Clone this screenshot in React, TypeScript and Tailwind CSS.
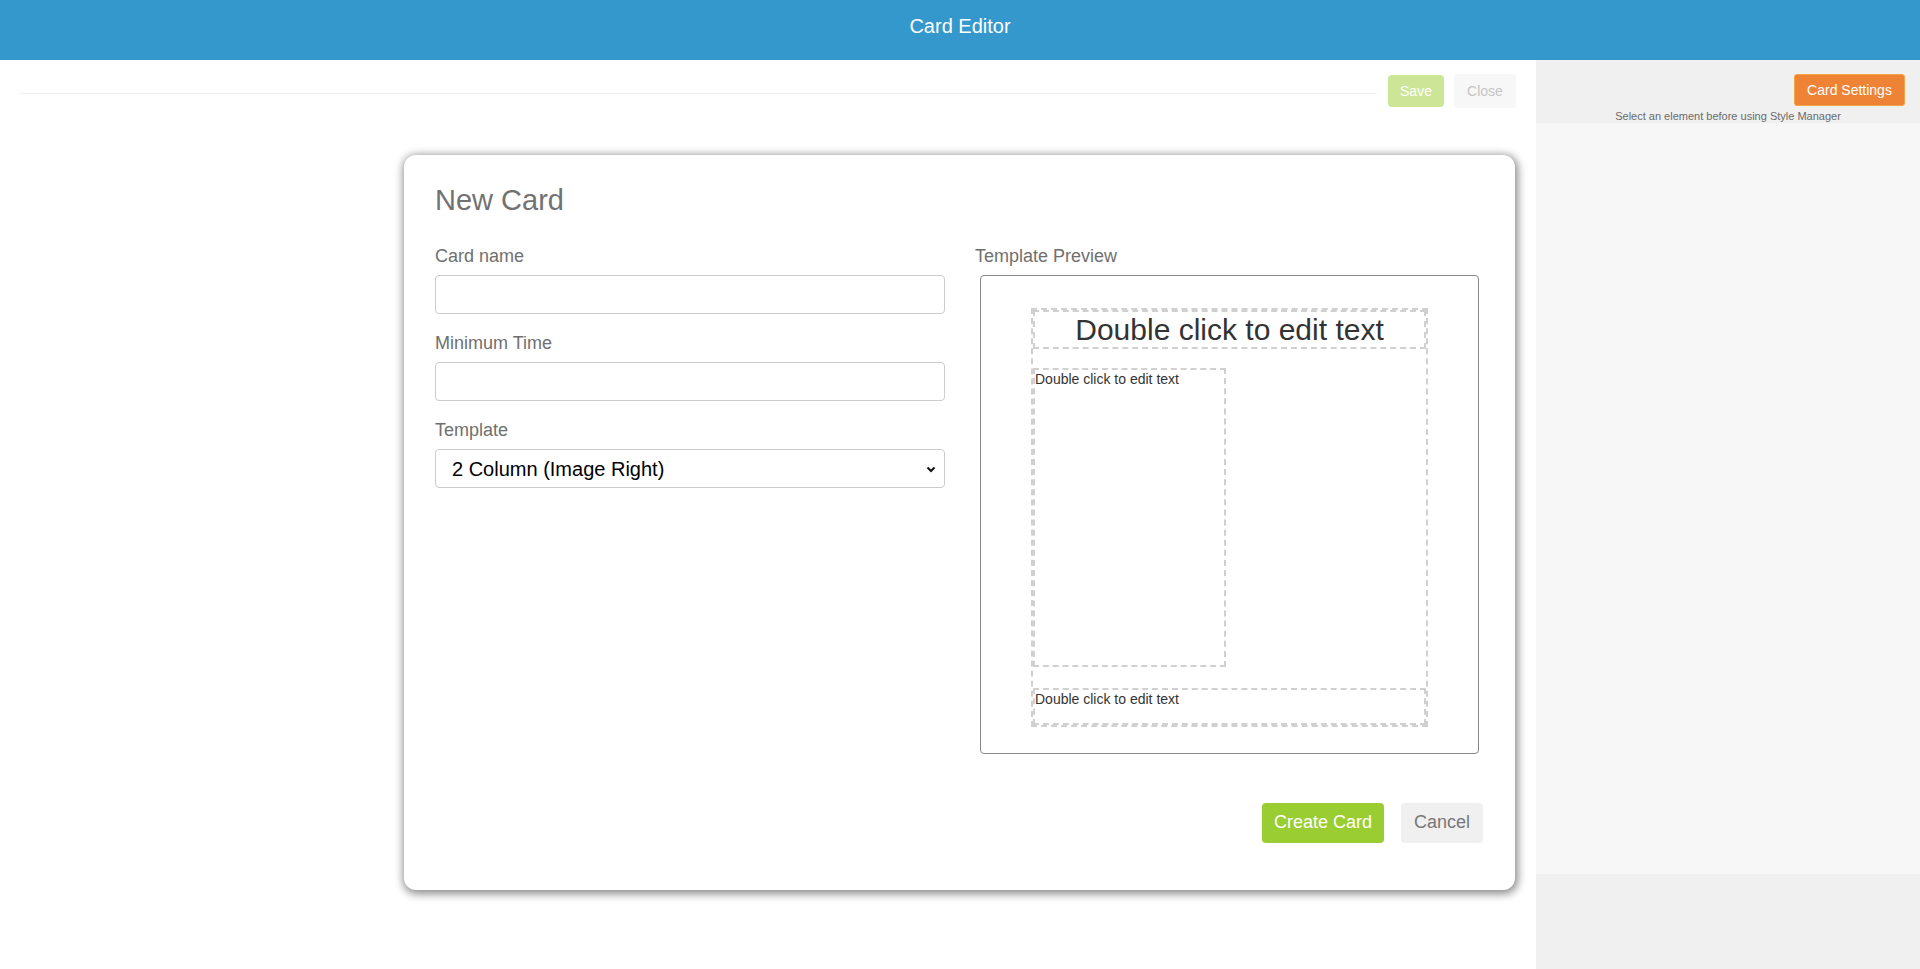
import React from "react";

function Field({ label, children }: { label: string; children: React.ReactNode }) {
  return (
    <div className="mb-[19px]">
      <div className="text-[18px] leading-[20px] text-[#6f6f6f] mb-[9px]">{label}</div>
      {children}
    </div>
  );
}

export default function App() {
  return (
    <div className="relative w-[1920px] h-[969px] overflow-hidden bg-white font-['Liberation_Sans',Arial,sans-serif]">
      <header className="h-[60px] bg-[#3498cc] text-white text-[20px] leading-[23px] text-center pt-[15px]">
        Card Editor
      </header>
      <div className="flex h-[909px]">
        <div className="flex-1">
          <div className="flex items-start pl-[20px] pt-[14px]">
            <div className="w-[1357px] h-[20px] border-b border-[#f0f0f0]" />
            <button className="ml-[11px] mt-[1px] h-[32px] w-[56px] rounded-[4px] bg-[#9acd32] opacity-50 text-white text-[14px]">
              Save
            </button>
            <button className="ml-[10px] h-[34px] w-[62px] rounded-[4px] bg-[#f7f7f7] text-[#c4c4c4] text-[14px]">
              Close
            </button>
          </div>
        </div>
        <aside className="w-[384px] flex flex-col">
          <div className="h-[63px] bg-[#f0f0f0] flex flex-col items-end pr-[15px] pt-[14px]">
            <button className="h-[34px] w-[111px] rounded-[3px] bg-[#ee8336] border border-[#f4a444] text-white text-[14px]">
              Card Settings
            </button>
            <div className="self-stretch mr-[-15px] text-center text-[11px] leading-[13px] text-[#6a6a6a] mt-[4px]">
              Select an element before using Style Manager
            </div>
          </div>
          <div className="h-[751px] bg-[#f7f7f7]" />
          <div className="flex-1 bg-[#f0f0f0]" />
        </aside>
      </div>

      <div className="absolute left-[404px] top-[155px] w-[1111px] h-[735px] rounded-[12px] bg-white shadow-[1px_2px_8px_2px_rgba(0,0,0,0.45)] pl-[31px] pr-[32px] pt-[29px]">
        <h3 className="text-[29px] leading-[32px] text-[#727272]">New Card</h3>
        <div className="flex mt-[30px]">
          <div className="w-[510px]">
            <Field label="Card name">
              <input className="block w-full h-[39px] rounded-[4px] border border-[#cccccc] outline-none" />
            </Field>
            <Field label="Minimum Time">
              <input className="block w-full h-[39px] rounded-[4px] border border-[#cccccc] outline-none" />
            </Field>
            <Field label="Template">
              <div className="relative h-[39px] rounded-[4px] border border-[#cccccc] flex items-center pl-[16px] text-[20px] text-black">
                2 Column (Image Right)
                <svg className="absolute right-[8px] top-[16px]" width="10" height="7" viewBox="0 0 10 7">
                  <path d="M1.5 1.5l3.5 3.5 3.5-3.5" fill="none" stroke="#111" strokeWidth="2" />
                </svg>
              </div>
            </Field>
          </div>
          <div className="ml-[30px]">
            <div className="text-[18px] leading-[20px] text-[#6f6f6f] mb-[9px]">Template Preview</div>
            <div className="ml-[5px] w-[499px] h-[479px] rounded-[4px] border border-[#888888] pt-[32px] px-[50px]">
              <div className="h-[419px] border-2 border-dashed border-[#d0d0d0] flex flex-col text-[#333333]">
                <div className="h-[39px] border-2 border-dashed border-[#d0d0d0] text-center text-[30px] leading-[35px]">
                  Double click to edit text
                </div>
                <div className="mt-[19px] w-[193px] h-[299px] border-2 border-dashed border-[#d0d0d0] text-[14px] leading-[16px] pt-[1px]">
                  Double click to edit text
                </div>
                <div className="mt-[21px] flex-1 border-2 border-dashed border-[#d0d0d0] text-[14px] leading-[16px] pt-[1px]">
                  Double click to edit text
                </div>
              </div>
            </div>
          </div>
        </div>
        <div className="flex justify-end mt-[49px]">
          <button className="h-[40px] w-[122px] rounded-[4px] bg-[#9acd32] text-white text-[18px] pb-[2px]">
            Create Card
          </button>
          <button className="ml-[17px] h-[40px] w-[82px] rounded-[4px] bg-[#f0f0f0] text-[#777777] text-[18px] pb-[2px]">
            Cancel
          </button>
        </div>
      </div>
    </div>
  );
}
